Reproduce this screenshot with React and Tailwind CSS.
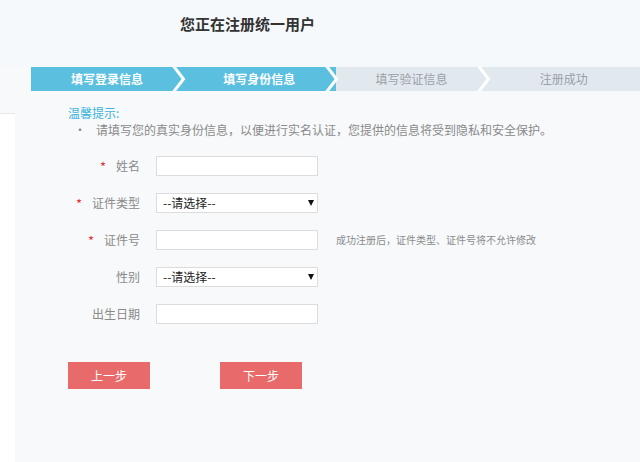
import React from 'react';

const font = { fontFamily: '"Noto Sans CJK SC", "Noto Sans", sans-serif' };

const steps = [
  { label: '填写登录信息', active: true },
  { label: '填写身份信息', active: true },
  { label: '填写验证信息', active: false },
  { label: '注册成功', active: false },
];

function Chevron({ color }) {
  return (
    <svg className="absolute -left-[11px] top-0 h-6 w-4" viewBox="0 0 16 24">
      <polygon points="0,0 10,12 0,24" fill={color} />
      <polyline points="1.5,-1 11.5,12 1.5,25" fill="none" stroke="#fff" strokeWidth="3" />
    </svg>
  );
}

function Field({ label, required, children, hint }) {
  return (
    <div className="flex h-[37px] items-center">
      <div className="flex w-[156px] items-center justify-end pr-[16px] text-[12px] text-[#8a8a8a]">
        {required && <span className="mr-[10px] mt-[2px] text-[13px] text-[#e2313b]">*</span>}
        <span>{label}</span>
      </div>
      {children}
      {hint && <span className="ml-[18px] text-[10px] text-[#8c8c8c]">{hint}</span>}
    </div>
  );
}

function TextBox() {
  return <input className="block h-[20px] w-[162px] border border-[#dcdcdc] bg-white px-1 text-[12px] outline-none" />;
}

function SelectBox() {
  return (
    <div className="relative h-[20px] w-[162px]">
      <select className="block h-[20px] w-[162px] appearance-none border border-[#dcdcdc] bg-white py-0 pl-[6px] text-[12px] leading-[18px] text-[#222] outline-none">
        <option>--请选择--</option>
      </select>
      <span className="pointer-events-none absolute right-[4px] top-[7px] h-0 w-0 border-x-[3px] border-t-[6px] border-x-transparent border-t-[#111]" />
    </div>
  );
}

export default function App() {
  return (
    <div className="h-[462px] w-[640px] overflow-hidden bg-[#f7f9fb]" style={font}>
      {/* header */}
      <div className="flex h-[67px] bg-[#f5f9fc] pl-[180px] pt-[13px]">
        <h1 className="text-[15px] font-bold text-[#333]">您正在注册统一用户</h1>
      </div>

      {/* steps */}
      <div className="ml-[31px] flex h-6">
        {steps.map((s, i) => (
          <div
            key={i}
            className={`relative flex flex-1 items-center justify-center text-[12px] ${
              s.active ? 'bg-[#5bc0e0] font-bold text-white' : 'bg-[#e1e9ef] text-[#9aa0a6]'
            }`}
          >
            {i > 0 && <Chevron color={steps[i - 1].active ? '#5bc0e0' : '#e1e9ef'} />}
            <span>{s.label}</span>
          </div>
        ))}
      </div>

      <div className="flex">
        <div className="mt-[22px] h-[350px] w-[15px] border-t border-[#e6e9ec] bg-white" />
        <div className="flex-1">
          {/* notice */}
          <div className="ml-[53px] mt-[13px] text-[12px] leading-[17px]">
            <div className="text-[#3eb4dc]">温馨提示:</div>
            <div className="flex text-[#8a8a8a]">
              <span className="ml-[6px] w-[22px]">•</span>
              <span>请填写您的真实身份信息，以便进行实名认证，您提供的信息将受到隐私和安全保护。</span>
            </div>
          </div>

          {/* form */}
          <div className="mt-[9px] -ml-[15px]">
            <Field label="姓名" required>
              <TextBox />
            </Field>
            <Field label="证件类型" required>
              <SelectBox />
            </Field>
            <Field label="证件号" required hint="成功注册后，证件类型、证件号将不允许修改">
              <TextBox />
            </Field>
            <Field label="性别">
              <SelectBox />
            </Field>
            <Field label="出生日期">
              <TextBox />
            </Field>
          </div>

          {/* buttons */}
          <div className="ml-[53px] mt-[30px] flex gap-[70px]">
            <button className="h-[27px] w-[82px] bg-[#e86a6a] text-[12px] text-white">上一步</button>
            <button className="h-[27px] w-[82px] bg-[#e86a6a] text-[12px] text-white">下一步</button>
          </div>
        </div>
      </div>
    </div>
  );
}
